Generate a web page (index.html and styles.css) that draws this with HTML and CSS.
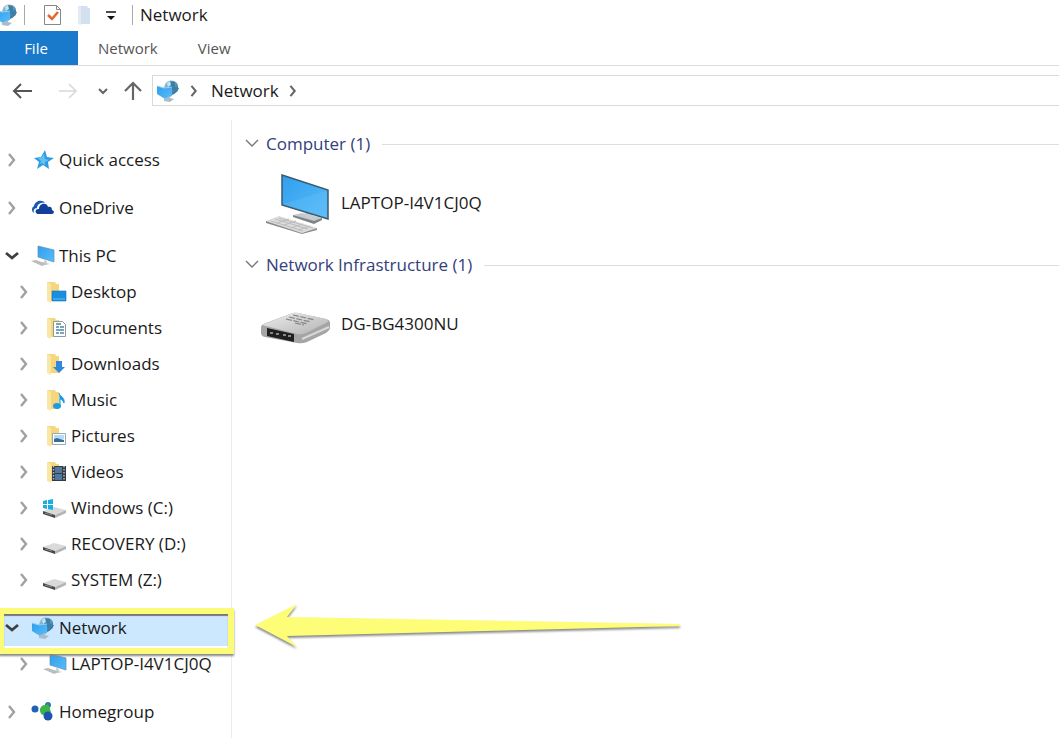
FILE: index.html
```
<!DOCTYPE html>
<html lang="en">
<head>
<meta charset="UTF-8">
<meta name="viewport" content="width=device-width, initial-scale=1">
<title>Network</title>
<link rel="stylesheet" href="styles.css">
</head>
<body>

<!-- Shared icons -->
<svg class="icon-defs" aria-hidden="true">
  <defs>
    <linearGradient id="screen" x1="0" y1="0" x2="1" y2="1">
      <stop offset="0" stop-color="#2f9fee"/>
      <stop offset="1" stop-color="#5abcf8"/>
    </linearGradient>
    <linearGradient id="globe" x1="0" y1="0" x2="1" y2="1">
      <stop offset="0" stop-color="#a9d3e6"/>
      <stop offset="1" stop-color="#24628f"/>
    </linearGradient>
    <linearGradient id="metal" x1="0" y1="0" x2="1" y2="1">
      <stop offset="0" stop-color="#efefef"/>
      <stop offset="1" stop-color="#b2b2b2"/>
    </linearGradient>
  </defs>
  <symbol id="i-right" viewBox="0 0 14 14"><path d="M4 1l5 6-5 6" fill="none" stroke="currentColor" stroke-width="2.4"/></symbol>
  <symbol id="i-down" viewBox="0 0 14 14"><path d="M1 4l6 5 6-5" fill="none" stroke="currentColor" stroke-width="2.8"/></symbol>
  <symbol id="i-fold" viewBox="0 0 14 14"><path d="M1 3l6 6 6-6" fill="none" stroke="currentColor" stroke-width="1.4"/></symbol>
  <symbol id="i-network" viewBox="0 0 24 24">
    <path d="M9 5q3-5 9-3 5 2 4 8-1 4-6 6L8 9z" fill="url(#globe)"/>
    <path d="M14 2l5 1v5l4 1-2 4-5-2-3-4z" fill="#3d7fa8"/>
    <path d="M11 4l3-2 1 4-3 2z" fill="#c5e3ef"/>
    <path d="M1 7l7 2 8-1v9l-7 3-8-5z" fill="url(#screen)"/>
    <path d="M1 7l7 2 8-1" fill="none" stroke="#8fd4fa"/>
    <path d="M8 20l6-3v2l4 1-4 3-6-1z" fill="#a9bdc9"/>
  </symbol>
  <symbol id="i-star" viewBox="0 0 24 24">
    <path d="M14 2l2 7 7 1-6 4 1 7-6-4-6 4 2-7-5-4 7-1z" fill="#2f9be2"/>
    <path d="M13 6l1 5 4 1-4 2v3l-3-2-2 1 1-3-3-3 4-1z" fill="#63c1f3"/>
  </symbol>
  <symbol id="i-cloud" viewBox="0 0 24 24">
    <path d="M3 17a4 4 0 0 1 0-7c1-5 8-7 11-3-5-1-8 2-8 5-3 0-4 3-3 5z" fill="#1957b4"/>
    <path d="M8 18c-5 0-4-6 0-5 0-6 8-7 9-2 3-1 4 1 4 3 3 1 2 4 0 4z" fill="#123f9b"/>
  </symbol>
  <symbol id="i-pc" viewBox="0 0 24 24">
    <path d="M7 2l16 4v12L7 13z" fill="url(#screen)" stroke="#5b8eb4" stroke-width=".7"/>
    <path d="M13 16l3 1v2l3 1-4 1-5-2 3-1z" fill="#c6d3dc"/>
    <path d="M0 17l5-1 11 4-5 2z" fill="#bcbcbc"/>
  </symbol>
  <symbol id="i-folder" viewBox="0 0 24 24">
    <path d="M4 2h8l1 2h3v17H4z" fill="#f5d67a"/>
    <path d="M4 2l4 2v19l-4-2z" fill="#fbe7a5"/>
  </symbol>
  <symbol id="i-desktop" viewBox="0 0 24 24">
    <use href="#i-folder"/>
    <path d="M9 11h14v10H9z" fill="#1a8fe0" stroke="#1473b8" stroke-width=".6"/>
    <path d="M10 19h12" stroke="#5cc0fa"/>
  </symbol>
  <symbol id="i-documents" viewBox="0 0 24 24">
    <use href="#i-folder"/>
    <path d="M10.500 5.500h9l3 3v12h-12z" fill="#fff" stroke="#8b9aa5"/>
    <path d="M13 8h5M13 11h3m1 0h4M13 14h8M13 17h3m1 0h4" stroke="#4a86a8" stroke-width="1.300"/>
  </symbol>
  <symbol id="i-downloads" viewBox="0 0 24 24">
    <use href="#i-folder"/>
    <path d="M13 9h6v6h3l-6 6-6-6h3z" fill="#2f88dc"/>
  </symbol>
  <symbol id="i-music" viewBox="0 0 24 24">
    <use href="#i-folder"/>
    <path d="M16 5c1 4 6 4 5 10-1-3-3-4-4-4v7" fill="#1d9be0" stroke="#1d9be0"/>
    <ellipse cx="14" cy="18" rx="4" ry="3" fill="#1d9be0"/>
  </symbol>
  <symbol id="i-pictures" viewBox="0 0 24 24">
    <use href="#i-folder"/>
    <path d="M9.500 9.500h13v11h-13z" fill="#fff" stroke="#9aa9b5"/>
    <path d="M11 11h10v4H11z" fill="#b5dcf2"/>
    <path d="M11 15l3-1 3 1 4 1v2H11z" fill="#356c9a"/>
  </symbol>
  <symbol id="i-videos" viewBox="0 0 24 24">
    <use href="#i-folder"/>
    <path d="M9 6h14v15H9z" fill="#343b44"/>
    <path d="M12 7h7v6h-7zM12 14h7v6h-7z" fill="#51799f"/>
    <path d="M10.500 6v15M21 6v15" stroke="#aeb6bd" stroke-width="1.500" stroke-dasharray="1.500 1.500"/>
  </symbol>
  <symbol id="i-drive" viewBox="0 0 24 24">
    <path d="M0 15l11-4 12 3-11 5z" fill="#dadada"/>
    <path d="M0 15l12 4v3L0 18z" fill="#484848"/>
    <path d="M12 19l11-5v3l-11 5z" fill="#b4b4b4"/>
    <path d="M2 17l7 2" stroke="#8d8d8d"/>
  </symbol>
  <symbol id="i-windrive" viewBox="0 0 24 24">
    <use href="#i-drive"/>
    <path d="M0 5l4-1v4H0zM5 4l5-1v5H5zM0 9h4v4l-4-1zM5 9h5v5l-5-1z" fill="#19aee0"/>
  </symbol>
  <symbol id="i-homegroup" viewBox="0 0 24 24">
    <circle cx="4" cy="9" r="3.500" fill="#1f63b8"/>
    <circle cx="17" cy="5" r="3" fill="#2b7f9c"/>
    <path d="M9 9l8-5 3 8-5 4-5-2z" fill="#3cb54a"/>
    <circle cx="14" cy="10" r="5" fill="#3cb54a"/>
    <circle cx="17" cy="16" r="4.500" fill="#1b55b0"/>
  </symbol>
</svg>

<header>
  <div class="title-bar">
    <svg class="icon app-icon"><use href="#i-network"/></svg>
    <span class="separator"></span>
    <button class="quick properties" type="button" aria-label="Properties">
      <svg width="20" height="22" viewBox="0 0 20 22"><path d="M1.500 1.500h12l4 4v15h-16z" fill="#fff" stroke="#888"/><path d="M13.500 1.500v4h4" fill="none" stroke="#888"/><path d="M5 11l4 4 6-7" fill="none" stroke="#e2672c" stroke-width="2.500"/></svg>
    </button>
    <button class="quick new-folder" type="button" aria-label="New folder">
      <svg width="14" height="20" viewBox="0 0 14 20"><path d="M1 1h9l1 2h2v16H1z" fill="#d3e1ef"/><path d="M1 1l3 1v18l-3-1z" fill="#e2ebf4"/></svg>
    </button>
    <button class="quick customize" type="button" aria-label="Customize toolbar">
      <svg width="10" height="10" viewBox="0 0 10 10"><path d="M0 2h10" stroke="#111" stroke-width="1.500"/><path d="M1 6h8l-4 4z" fill="#111"/></svg>
    </button>
    <span class="separator title-separator"></span>
    <span class="title">Network</span>
  </div>

  <div class="ribbon">
    <button class="tab file" type="button">File</button>
    <button class="tab" type="button">Network</button>
    <button class="tab" type="button">View</button>
  </div>

  <div class="address-row">
    <button class="nav-btn" type="button" aria-label="Back"><svg width="20" height="18" viewBox="0 0 20 18"><path d="M20 9H2m7-7L2 9l7 7" fill="none" stroke="#555" stroke-width="2"/></svg></button>
    <button class="nav-btn" type="button" aria-label="Forward" disabled><svg width="20" height="18" viewBox="0 0 20 18"><path d="M1 9h17m-7-7l7 7-7 7" fill="none" stroke="#d8d8d8" stroke-width="1.500"/></svg></button>
    <button class="nav-btn recent" type="button" aria-label="Recent locations"><svg width="10" height="10" viewBox="0 0 10 10"><path d="M1 3l4 4 4-4" fill="none" stroke="#666" stroke-width="2"/></svg></button>
    <button class="nav-btn up" type="button" aria-label="Up"><svg width="18" height="20" viewBox="0 0 18 20"><path d="M9 19V2M1 10l8-8 8 8" fill="none" stroke="#666" stroke-width="2.200"/></svg></button>
    <div class="address">
      <svg class="icon"><use href="#i-network"/></svg>
      <svg class="crumb"><use href="#i-right"/></svg>
      <a href="#network">Network</a>
      <svg class="crumb"><use href="#i-right"/></svg>
    </div>
  </div>
</header>

<div class="explorer">
  <nav class="tree" aria-label="Folders">
    <ul>
      <li><a class="row" href="#quick"><svg class="arrow"><use href="#i-right"/></svg><svg class="icon"><use href="#i-star"/></svg>Quick access</a></li>
      <li><a class="row" href="#onedrive"><svg class="arrow"><use href="#i-right"/></svg><svg class="icon"><use href="#i-cloud"/></svg>OneDrive</a></li>
      <li>
        <a class="row open" href="#pc"><svg class="arrow"><use href="#i-down"/></svg><svg class="icon"><use href="#i-pc"/></svg>This PC</a>
        <ul>
          <li><a class="row" href="#desktop"><svg class="arrow"><use href="#i-right"/></svg><svg class="icon"><use href="#i-desktop"/></svg>Desktop</a></li>
          <li><a class="row" href="#documents"><svg class="arrow"><use href="#i-right"/></svg><svg class="icon"><use href="#i-documents"/></svg>Documents</a></li>
          <li><a class="row" href="#downloads"><svg class="arrow"><use href="#i-right"/></svg><svg class="icon"><use href="#i-downloads"/></svg>Downloads</a></li>
          <li><a class="row" href="#music"><svg class="arrow"><use href="#i-right"/></svg><svg class="icon"><use href="#i-music"/></svg>Music</a></li>
          <li><a class="row" href="#pictures"><svg class="arrow"><use href="#i-right"/></svg><svg class="icon"><use href="#i-pictures"/></svg>Pictures</a></li>
          <li><a class="row" href="#videos"><svg class="arrow"><use href="#i-right"/></svg><svg class="icon"><use href="#i-videos"/></svg>Videos</a></li>
          <li><a class="row" href="#c"><svg class="arrow"><use href="#i-right"/></svg><svg class="icon"><use href="#i-windrive"/></svg>Windows (C:)</a></li>
          <li><a class="row" href="#d"><svg class="arrow"><use href="#i-right"/></svg><svg class="icon"><use href="#i-drive"/></svg>RECOVERY (D:)</a></li>
          <li><a class="row" href="#z"><svg class="arrow"><use href="#i-right"/></svg><svg class="icon"><use href="#i-drive"/></svg>SYSTEM (Z:)</a></li>
        </ul>
      </li>
      <li class="current">
        <a class="row open selected" href="#network"><svg class="arrow"><use href="#i-down"/></svg><svg class="icon"><use href="#i-network"/></svg>Network</a>
        <span class="highlight"></span>
        <svg class="pointer" viewBox="0 0 426 46" aria-hidden="true"><path d="M0 21L42 0 32 13 425 20v2L32 32l10 11z" fill="#fdfd78"/></svg>
        <ul>
          <li><a class="row" href="#laptop"><svg class="arrow"><use href="#i-right"/></svg><svg class="icon"><use href="#i-pc"/></svg>LAPTOP-I4V1CJ0Q</a></li>
        </ul>
      </li>
      <li><a class="row" href="#homegroup"><svg class="arrow"><use href="#i-right"/></svg><svg class="icon"><use href="#i-homegroup"/></svg>Homegroup</a></li>
    </ul>
  </nav>

  <main>
    <section>
      <h2><svg class="fold"><use href="#i-fold"/></svg>Computer (1)</h2>
      <a class="device" href="#laptop">
        <svg width="72" height="64" viewBox="0 0 72 64">
          <path d="M34 44l9-2 20 5-8 4z" fill="#c5c9cd"/>
          <path d="M34 44l21 6 8-3v2l-8 4-21-7z" fill="#7d8388"/>
          <path d="M46 38l8 2v8l-8-2z" fill="#c9ced3"/>
          <path d="M23 4l46 15v29L23 34z" fill="url(#screen)" stroke="#3c5a70" stroke-width="1.500"/>
          <path d="M24 33L67 20v26z" fill="#7dcdfc" opacity=".2"/>
          <path d="M7 50l13-5 38 12-15 5z" fill="#dcdcdc"/>
          <path d="M7 50l36 12 15-5v2l-15 4L7 52z" fill="#8c8c8c"/>
          <path d="M12 50l32 10M16 48l33 10M20 47l34 10M18 52l12-4M25 54l12-4M32 57l12-4M39 59l12-4" stroke="#bcbcbc" fill="none"/>
        </svg>
        LAPTOP-I4V1CJ0Q
      </a>
    </section>
    <section>
      <h2><svg class="fold"><use href="#i-fold"/></svg>Network Infrastructure (1)</h2>
      <a class="device" href="#router">
        <svg width="72" height="64" viewBox="0 0 72 64">
          <path d="M2 35q0-2 5-4l24-9q4-2 8-1l28 6q4 1 4 4v5q0 2-4 5L48 50q-5 2-10 1L6 45q-4-1-4-4z" fill="#a5a5a5"/>
          <path d="M3 33l28-11q4-2 8-1l28 6q4 2 0 4L47 41q-4 2-9 1z" fill="url(#metal)"/>
          <path d="M8 36l27 6v8L8 44z" fill="#202020"/>
          <path d="M11 41h3m3 1h3m4 1h3m2 1h3" stroke="#aaa" stroke-width="1.500"/>
          <path d="M34 23l22 5M30 25l22 5M27 27l22 5M36 31l9 2" stroke="#858585" stroke-width="1.200" stroke-dasharray="6 1.500"/>
          <path d="M43 47l27-12" stroke="#d8d8d8" stroke-width="2"/>
        </svg>
        DG-BG4300NU
      </a>
    </section>
  </main>
</div>

</body>
</html>
```
FILE: styles.css
```
* {
  box-sizing: border-box;
}
body {
  margin: 0;
  min-height: 100vh;
  display: flex;
  flex-direction: column;
  font-family: "Segoe UI", "Open Sans", "Noto Sans", sans-serif;
  font-size: 17px;
  line-height: 24px;
  color: #1a1a1a;
  background: #fff;
  overflow: hidden;
}
ul {
  list-style: none;
  margin: 0;
  padding: 0;
}
a {
  color: inherit;
  text-decoration: none;
}
button {
  border: none;
  padding: 0;
  background: none;
  font-family: inherit;
  display: flex;
  align-items: center;
  justify-content: center;
}
.icon-defs {
  position: absolute;
  width: 0;
  height: 0;
}
.icon {
  width: 24px;
  height: 24px;
  flex-shrink: 0;
}

/* Title bar */
.title-bar {
  display: flex;
  align-items: center;
  height: 31px;
  padding-bottom: 2px;
}
.app-icon {
  margin-left: -6px;
}
.separator {
  width: 1px;
  height: 20px;
  margin-left: 6px;
  background: #aaa;
}
.properties {
  margin-left: 18px;
}
.new-folder {
  margin-left: 14px;
}
.customize {
  margin-left: 15px;
}
.title-separator {
  margin-left: 16px;
}
.title {
  margin-left: 7px;
}

/* Ribbon */
.ribbon {
  display: flex;
  height: 35px;
  border-bottom: 1px solid #dcdcdc;
}
.tab {
  padding: 0 20px;
  font-size: 15px;
  color: #555;
}
.tab.file {
  width: 78px;
  padding: 0 6px 0 0;
  color: #fff;
  background: #1979ca;
}

/* Address bar */
.address-row {
  display: flex;
  align-items: center;
  padding: 9px 0 14px 12px;
}
.nav-btn {
  margin-right: 26px;
}
.nav-btn:disabled {
  margin-right: 20px;
}
.nav-btn.recent {
  margin-right: 16px;
}
.nav-btn.up {
  margin-right: 10px;
}
.address {
  flex: 1;
  display: flex;
  align-items: center;
  height: 31px;
  padding-left: 3px;
  border: 1px solid #d9d9d9;
  border-right: none;
}
.crumb {
  width: 14px;
  height: 12px;
  margin: 0 10px 0 7px;
  color: #666;
}

.explorer {
  flex: 1;
  display: flex;
}

/* Folder tree */
.tree {
  width: 232px;
  flex-shrink: 0;
  padding-top: 22px;
  border-right: 1px solid #ececec;
}
.tree > ul {
  display: flex;
  flex-direction: column;
  gap: 12px;
}
.tree ul ul {
  padding-left: 12px;
}
.row {
  display: flex;
  align-items: center;
  height: 36px;
  padding-left: 5px;
  white-space: nowrap;
}
.row .icon {
  margin: 0 4px 0 12px;
}
.arrow {
  width: 14px;
  height: 14px;
  color: #a0a0a0;
}
.open .arrow {
  color: #404040;
}
.selected {
  margin-right: 3px;
  background: #cce8ff;
}
.current {
  position: relative;
}
.highlight {
  position: absolute;
  top: -2px;
  left: -1px;
  width: 235px;
  height: 46px;
  border: 6px solid #fbfb78;
  border-left-width: 5px;
  box-shadow: 0 2px 2px #888, inset 0 2px 1px #777;
  pointer-events: none;
}
.pointer {
  position: absolute;
  top: -6px;
  left: 255px;
  width: 426px;
  height: 46px;
  overflow: visible;
  filter: drop-shadow(0 2px 1px #888);
  pointer-events: none;
}

/* Devices */
main {
  flex: 1;
  padding: 12px 0 0 13px;
}
h2 {
  display: flex;
  align-items: center;
  margin: 0;
  font-size: 17px;
  font-weight: 400;
  color: #34407c;
}
h2::after {
  content: "";
  flex: 1;
  height: 1px;
  margin-left: 12px;
  background: #dedede;
}
.fold {
  width: 14px;
  height: 14px;
  margin-right: 7px;
  color: #777;
}
.device {
  display: flex;
  align-items: center;
  gap: 10px;
  height: 97px;
  padding: 0 0 3px 14px;
}
```
